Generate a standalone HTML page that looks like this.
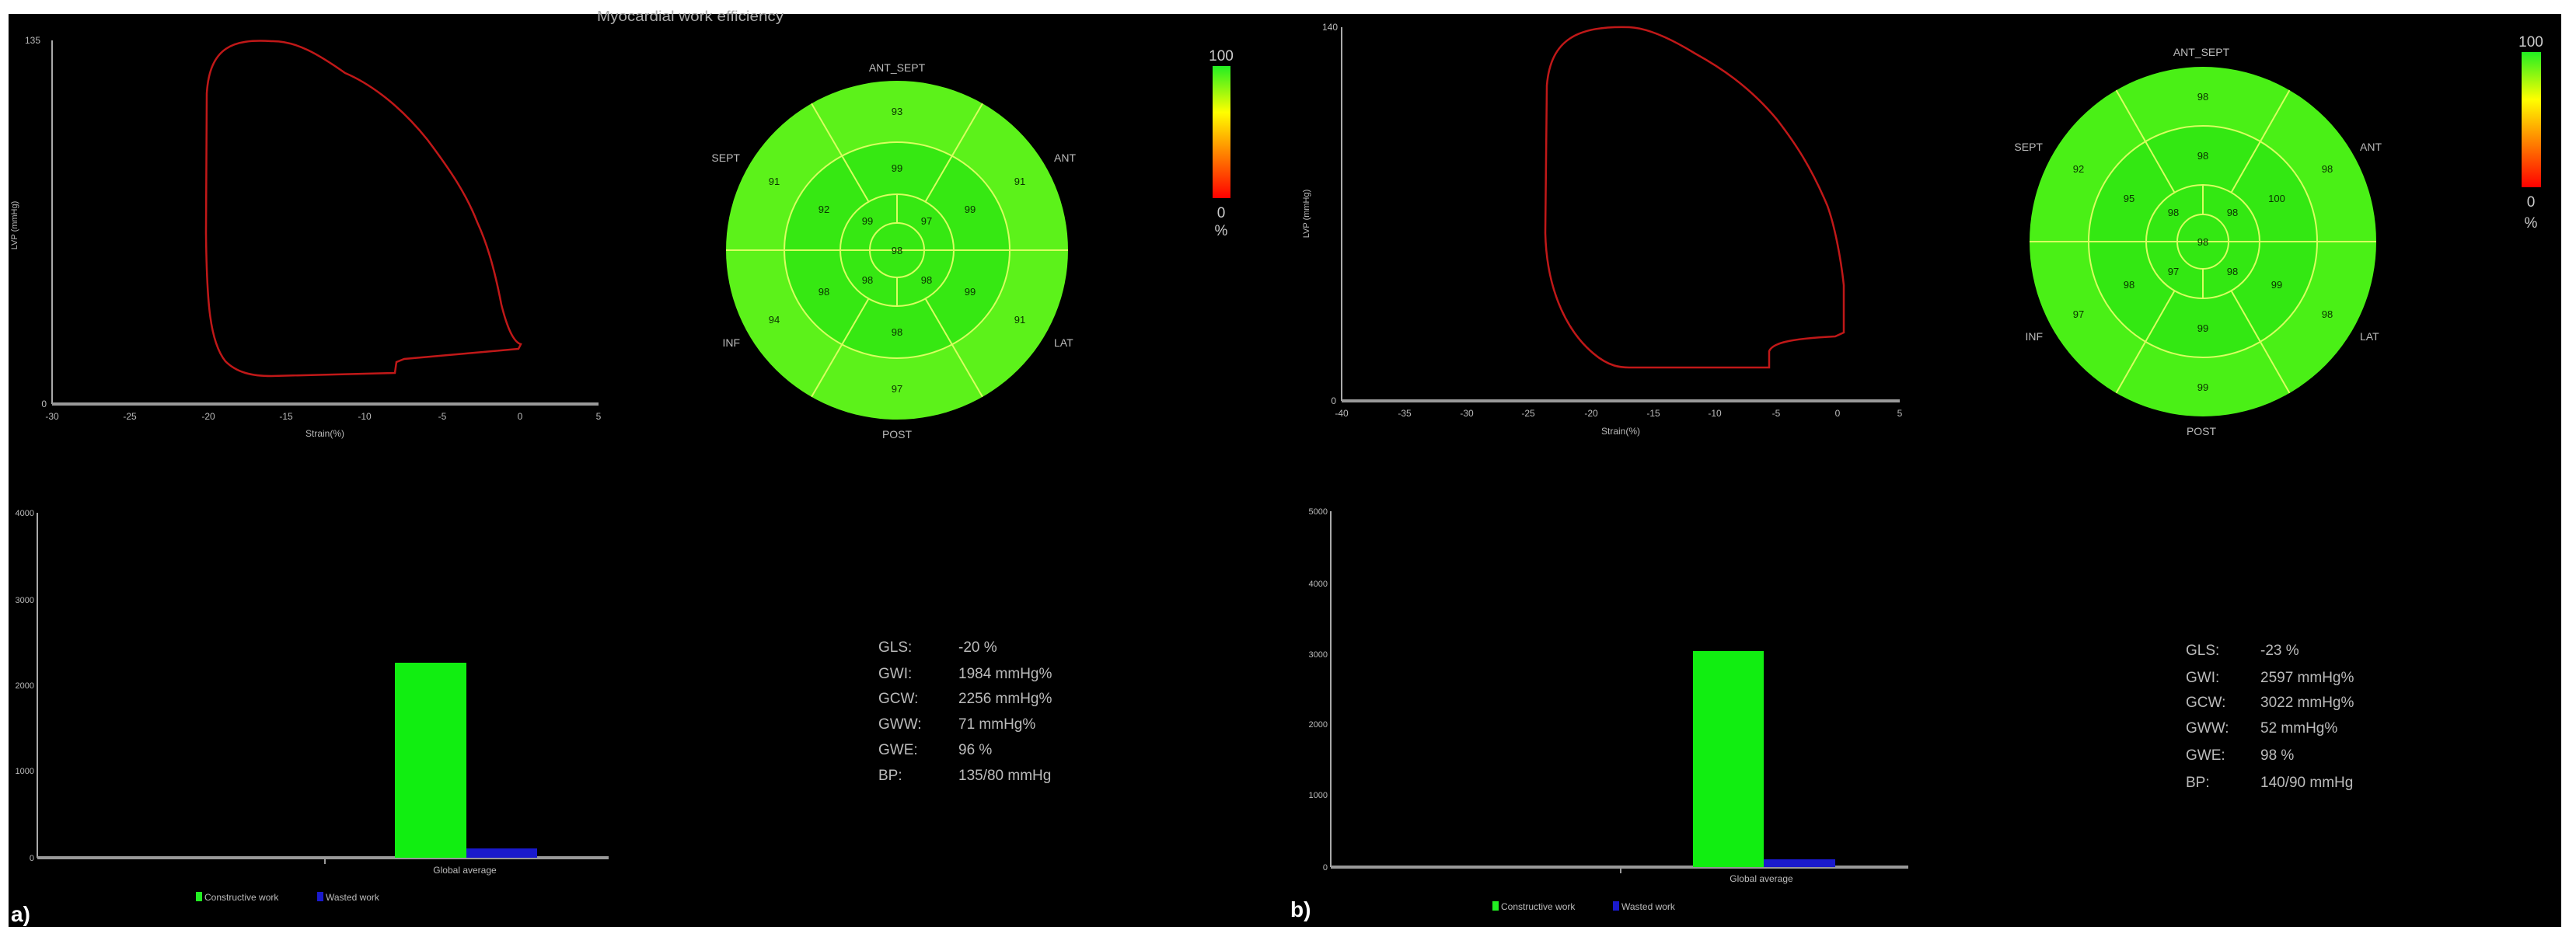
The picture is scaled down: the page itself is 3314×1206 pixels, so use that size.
<!DOCTYPE html>
<html><head><meta charset="utf-8"><style>
html,body{margin:0;padding:0;background:#fff;}
svg{display:block;}
text{font-family:"Liberation Sans",sans-serif;}
</style></head><body>
<svg width="3314" height="1206" viewBox="0 0 3314 1206" xmlns="http://www.w3.org/2000/svg">
<defs>
<linearGradient id="cb" x1="0" y1="0" x2="0" y2="1">
<stop offset="0" stop-color="#22ee22"/><stop offset="0.35" stop-color="#ffff00"/><stop offset="0.65" stop-color="#ff8800"/><stop offset="1" stop-color="#ff0000"/>
</linearGradient>
</defs>
<rect x="0" y="0" width="3314" height="1206" fill="#fff"/>
<rect x="11" y="18" width="3284" height="1175" fill="#000"/>

<!-- ===== LEFT PANEL ===== -->
<text x="888" y="27" fill="#aaa" font-size="18" text-anchor="middle" textLength="240" lengthAdjust="spacingAndGlyphs">Myocardial work efficiency</text>
<line x1="67" y1="52" x2="67" y2="520" stroke="#aaa" stroke-width="2"/>
<line x1="67" y1="520" x2="770" y2="520" stroke="#999" stroke-width="4"/>
<g fill="#bbb" font-size="12" text-anchor="middle">
<text x="67" y="540">-30</text><text x="167" y="540">-25</text><text x="268" y="540">-20</text><text x="368" y="540">-15</text><text x="469" y="540">-10</text><text x="569" y="540">-5</text><text x="669" y="540">0</text><text x="770" y="540">5</text>
<text x="418" y="562">Strain(%)</text>
<text x="52" y="56" text-anchor="end">135</text>
<text x="60" y="524" text-anchor="end">0</text>
<text transform="translate(22,290) rotate(-90)" font-size="11">LVP (mmHg)</text>
</g>
<path d="M349,53 C300,50 270,60 266,120 L265,300 C266,390 270,440 290,465 C305,480 325,484 349,484 L508,480 L510,466 L520,462 L667,449 L670,443 C660,440 652,420 645,392 C635,340 625,310 614,286 C600,250 580,220 550,180 C510,130 470,105 444,94 C410,70 380,52 349,53 Z" fill="none" stroke="#c01818" stroke-width="2.5"/>

<ellipse cx="1154" cy="322" rx="220" ry="218" fill="#5cf21a"/>
<ellipse cx="1154" cy="322" rx="145" ry="139" fill="#36e812"/>
<g fill="none" stroke="#d8ff60" stroke-width="2">
<ellipse cx="1154" cy="322" rx="145" ry="139"/>
<ellipse cx="1154" cy="322" rx="73" ry="72"/>
<ellipse cx="1154" cy="322" rx="35" ry="35"/>
<line x1="934" y1="322" x2="1374" y2="322"/>
<line x1="1190.5" y1="259.6" x2="1264" y2="133.2"/>
<line x1="1117.5" y1="259.6" x2="1044" y2="133.2"/>
<line x1="1117.5" y1="384.4" x2="1044" y2="510.8"/>
<line x1="1190.5" y1="384.4" x2="1264" y2="510.8"/>
<line x1="1154" y1="287" x2="1154" y2="250"/>
<line x1="1154" y1="357" x2="1154" y2="394"/>
</g>
<g fill="#0a3300" font-size="13" text-anchor="middle">
<text x="1154" y="148">93</text><text x="1312" y="238">91</text><text x="996" y="238">91</text><text x="996" y="416">94</text><text x="1312" y="416">91</text><text x="1154" y="505">97</text>
<text x="1154" y="221">99</text><text x="1248" y="274">99</text><text x="1060" y="274">92</text><text x="1060" y="380">98</text><text x="1248" y="380">99</text><text x="1154" y="432">98</text>
<text x="1116" y="289">99</text><text x="1192" y="289">97</text><text x="1116" y="365">98</text><text x="1192" y="365">98</text>
<text x="1154" y="327">98</text>
</g>
<g fill="#bbb" font-size="14">
<text x="1154" y="92" text-anchor="middle">ANT_SEPT</text>
<text x="952" y="208" text-anchor="end">SEPT</text>
<text x="1356" y="208">ANT</text>
<text x="952" y="446" text-anchor="end">INF</text>
<text x="1356" y="446">LAT</text>
<text x="1154" y="564" text-anchor="middle">POST</text>
</g>
<rect x="1560" y="85" width="23" height="170" fill="url(#cb)"/>
<g fill="#ccc" font-size="19" text-anchor="middle">
<text x="1571" y="78">100</text><text x="1571" y="280">0</text><text x="1571" y="303">%</text>
</g>

<line x1="48" y1="660" x2="48" y2="1104" stroke="#aaa" stroke-width="2"/>
<line x1="48" y1="1104" x2="783" y2="1104" stroke="#999" stroke-width="4"/>
<line x1="418" y1="1104" x2="418" y2="1112" stroke="#999" stroke-width="2"/>
<g fill="#bbb" font-size="11" text-anchor="end">
<text x="44" y="664">4000</text><text x="44" y="776">3000</text><text x="44" y="886">2000</text><text x="44" y="996">1000</text><text x="44" y="1108">0</text>
</g>
<rect x="508" y="853" width="92" height="251" fill="#11ee11"/>
<rect x="600" y="1092" width="91" height="12" fill="#1a1acc"/>
<text x="598" y="1124" fill="#bbb" font-size="12" text-anchor="middle">Global average</text>
<rect x="252" y="1148" width="8" height="12" fill="#22ee22"/>
<text x="263" y="1159" fill="#bbb" font-size="12">Constructive work</text>
<rect x="408" y="1148" width="8" height="12" fill="#1a1acc"/>
<text x="419" y="1159" fill="#bbb" font-size="12">Wasted work</text>
<text x="14" y="1186" fill="#fff" font-size="28" font-weight="bold" font-family="Liberation Serif,serif">a)</text>
<g fill="#bbb" font-size="19">
<text x="1130" y="839">GLS:</text><text x="1233" y="839">-20 %</text>
<text x="1130" y="873">GWI:</text><text x="1233" y="873">1984 mmHg%</text>
<text x="1130" y="905">GCW:</text><text x="1233" y="905">2256 mmHg%</text>
<text x="1130" y="938">GWW:</text><text x="1233" y="938">71 mmHg%</text>
<text x="1130" y="971">GWE:</text><text x="1233" y="971">96 %</text>
<text x="1130" y="1004">BP:</text><text x="1233" y="1004">135/80 mmHg</text>
</g>

<!-- ===== RIGHT PANEL ===== -->
<line x1="1726" y1="35" x2="1726" y2="516" stroke="#aaa" stroke-width="2"/>
<line x1="1726" y1="516" x2="2444" y2="516" stroke="#999" stroke-width="4"/>
<g fill="#bbb" font-size="12" text-anchor="middle">
<text x="1726" y="536">-40</text><text x="1807" y="536">-35</text><text x="1887" y="536">-30</text><text x="1966" y="536">-25</text><text x="2047" y="536">-20</text><text x="2127" y="536">-15</text><text x="2206" y="536">-10</text><text x="2285" y="536">-5</text><text x="2364" y="536">0</text><text x="2444" y="536">5</text>
<text x="2085" y="559">Strain(%)</text>
<text x="1721" y="39" text-anchor="end">140</text>
<text x="1719" y="520" text-anchor="end">0</text>
<text transform="translate(1684,275) rotate(-90)" font-size="11">LVP (mmHg)</text>
</g>
<path d="M2096,35 C2030,33 1995,50 1990,110 L1988,300 C1990,380 2020,430 2050,455 C2070,472 2085,473 2096,473 L2276,473 L2276,452 C2280,442 2300,436 2361,433 L2372,428 L2372,367 C2368,330 2360,290 2351,265 C2330,215 2310,185 2287,155 C2250,110 2210,85 2181,69 C2150,50 2120,36 2096,35 Z" fill="none" stroke="#c01818" stroke-width="2.5"/>

<ellipse cx="2834" cy="311" rx="223" ry="225" fill="#4af016"/>
<ellipse cx="2834" cy="311" rx="147" ry="149" fill="#33e812"/>
<g fill="none" stroke="#d8ff60" stroke-width="2">
<ellipse cx="2834" cy="311" rx="147" ry="149"/>
<ellipse cx="2834" cy="311" rx="73" ry="73"/>
<ellipse cx="2834" cy="311" rx="33" ry="35"/>
<line x1="2611" y1="311" x2="3057" y2="311"/>
<line x1="2870.5" y1="247.8" x2="2945.5" y2="116.1"/>
<line x1="2797.5" y1="247.8" x2="2722.5" y2="116.1"/>
<line x1="2797.5" y1="374.2" x2="2722.5" y2="505.9"/>
<line x1="2870.5" y1="374.2" x2="2945.5" y2="505.9"/>
<line x1="2834" y1="276" x2="2834" y2="238"/>
<line x1="2834" y1="346" x2="2834" y2="384"/>
</g>
<g fill="#0a3300" font-size="13" text-anchor="middle">
<text x="2834" y="129">98</text><text x="2994" y="222">98</text><text x="2674" y="222">92</text><text x="2674" y="409">97</text><text x="2994" y="409">98</text><text x="2834" y="503">99</text>
<text x="2834" y="205">98</text><text x="2929" y="260">100</text><text x="2739" y="260">95</text><text x="2739" y="371">98</text><text x="2929" y="371">99</text><text x="2834" y="427">99</text>
<text x="2796" y="278">98</text><text x="2872" y="278">98</text><text x="2796" y="354">97</text><text x="2872" y="354">98</text>
<text x="2834" y="316">98</text>
</g>
<g fill="#bbb" font-size="14">
<text x="2832" y="72" text-anchor="middle">ANT_SEPT</text>
<text x="2628" y="194" text-anchor="end">SEPT</text>
<text x="3036" y="194">ANT</text>
<text x="2628" y="438" text-anchor="end">INF</text>
<text x="3036" y="438">LAT</text>
<text x="2832" y="560" text-anchor="middle">POST</text>
</g>
<rect x="3244" y="67" width="25" height="174" fill="url(#cb)"/>
<g fill="#ccc" font-size="19" text-anchor="middle">
<text x="3256" y="60">100</text><text x="3256" y="266">0</text><text x="3256" y="293">%</text>
</g>

<line x1="1712" y1="658" x2="1712" y2="1116" stroke="#aaa" stroke-width="2"/>
<line x1="1712" y1="1116" x2="2455" y2="1116" stroke="#999" stroke-width="4"/>
<line x1="2085" y1="1116" x2="2085" y2="1124" stroke="#999" stroke-width="2"/>
<g fill="#bbb" font-size="11" text-anchor="end">
<text x="1708" y="662">5000</text><text x="1708" y="755">4000</text><text x="1708" y="846">3000</text><text x="1708" y="936">2000</text><text x="1708" y="1027">1000</text><text x="1708" y="1120">0</text>
</g>
<rect x="2178" y="838" width="91" height="278" fill="#11ee11"/>
<rect x="2269" y="1106" width="92" height="10" fill="#1a1acc"/>
<text x="2266" y="1135" fill="#bbb" font-size="12" text-anchor="middle">Global average</text>
<rect x="1920" y="1160" width="8" height="12" fill="#22ee22"/>
<text x="1931" y="1171" fill="#bbb" font-size="12">Constructive work</text>
<rect x="2075" y="1160" width="8" height="12" fill="#1a1acc"/>
<text x="2086" y="1171" fill="#bbb" font-size="12">Wasted work</text>
<text x="1660" y="1180" fill="#fff" font-size="28" font-weight="bold" font-family="Liberation Serif,serif">b)</text>
<g fill="#bbb" font-size="19">
<text x="2812" y="843">GLS:</text><text x="2908" y="843">-23 %</text>
<text x="2812" y="878">GWI:</text><text x="2908" y="878">2597 mmHg%</text>
<text x="2812" y="910">GCW:</text><text x="2908" y="910">3022 mmHg%</text>
<text x="2812" y="943">GWW:</text><text x="2908" y="943">52 mmHg%</text>
<text x="2812" y="978">GWE:</text><text x="2908" y="978">98 %</text>
<text x="2812" y="1013">BP:</text><text x="2908" y="1013">140/90 mmHg</text>
</g>
</svg>
</body></html>
